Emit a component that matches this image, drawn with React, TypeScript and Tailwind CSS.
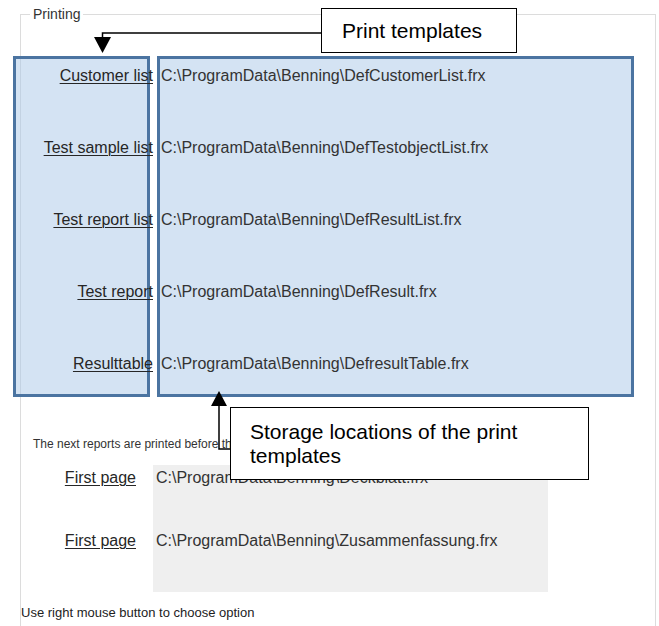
import React from 'react';

const templates = [
  { label: 'Customer list', path: 'C:\\ProgramData\\Benning\\DefCustomerList.frx' },
  { label: 'Test sample list', path: 'C:\\ProgramData\\Benning\\DefTestobjectList.frx' },
  { label: 'Test report list', path: 'C:\\ProgramData\\Benning\\DefResultList.frx' },
  { label: 'Test report', path: 'C:\\ProgramData\\Benning\\DefResult.frx' },
  { label: 'Resulttable', path: 'C:\\ProgramData\\Benning\\DefresultTable.frx' },
];

const preReports = [
  { label: 'First page', path: 'C:\\ProgramData\\Benning\\Deckblatt.frx' },
  { label: 'First page', path: 'C:\\ProgramData\\Benning\\Zusammenfassung.frx' },
];

function Arrows() {
  return (
    <svg className="pointer-events-none absolute inset-0" width={659} height={626} viewBox="0 0 659 626">
      {/* Print templates -> labels column */}
      <polyline points="321,33 102.5,33 102.5,40" fill="none" stroke="#000" strokeWidth={1.5} />
      <polygon points="94,37 111,37 102.5,53" fill="#000" />
      {/* Storage locations -> paths column */}
      <polyline points="230,449 219,449 219,404" fill="none" stroke="#000" strokeWidth={1.5} />
      <polygon points="211,406 227,406 219,391" fill="#000" />
    </svg>
  );
}

export default function App() {
  return (
    <div className="relative h-[626px] w-[659px] overflow-hidden bg-white pl-[20px] pt-[14px] font-['Liberation_Sans',Arial,sans-serif] text-[#262626]">
      <div className="relative h-[640px] w-[636px] border border-[#dcdcdc]">
        <span className="absolute -top-[9px] left-[9px] bg-white px-[3px] text-[14px] leading-[16px] text-[#333]">
          Printing
        </span>

        <div className="pt-[41px]">
          {/* highlighted template columns */}
          <div className="-ml-[8px] flex gap-[7px]">
            <div className="flex h-[341px] w-[137px] flex-col items-end gap-[52px] border-[3px] border-[#4b74a1] bg-[rgba(170,200,232,0.5)] pt-[7px]">
              {templates.map((t) => (
                <span
                  key={t.label}
                  className="-mr-[6px] whitespace-nowrap text-[16px] leading-[20px] underline decoration-1 underline-offset-[2px]"
                >
                  {t.label}
                </span>
              ))}
            </div>
            <div className="flex h-[341px] w-[477px] flex-col gap-[52px] border-[3px] border-[#4b74a1] bg-[rgba(170,200,232,0.5)] pl-[1px] pt-[7px]">
              {templates.map((t) => (
                <span key={t.path} className="whitespace-nowrap text-[16px] leading-[20px] text-[#333]">
                  {t.path}
                </span>
              ))}
            </div>
          </div>

          <p className="ml-[12px] mt-[40px] whitespace-nowrap text-[12px] leading-[14px] text-[#333]">
            The next reports are printed before the actual report:
          </p>

          <div className="mt-[14px] flex">
            <div className="flex w-[132px] flex-col items-end gap-[43px] pr-[17px] pt-[3px]">
              {preReports.map((r, i) => (
                <span key={i} className="whitespace-nowrap text-[16px] leading-[20px] underline decoration-1 underline-offset-[2px]">
                  {r.label}
                </span>
              ))}
            </div>
            <div className="flex h-[127px] w-[395px] flex-col gap-[43px] bg-[#efefef] pl-[3px] pt-[3px]">
              {preReports.map((r) => (
                <span key={r.path} className="whitespace-nowrap text-[16px] leading-[20px] text-[#333]">
                  {r.path}
                </span>
              ))}
            </div>
          </div>

          <p className="mt-[13px] whitespace-nowrap text-[13px] leading-[16px] text-[#222]">
            Use right mouse button to choose option
          </p>
        </div>
      </div>

      {/* callouts */}
      <div className="absolute left-[321px] top-[8px] flex h-[45px] w-[196px] items-center border border-black bg-white pl-[20px] text-[21px] leading-[24px] text-black">
        Print templates
      </div>
      <div className="absolute left-[230px] top-[407px] h-[73px] w-[359px] border border-black bg-white pl-[19px] pt-[12px] text-[21px] leading-[24px] text-black">
        Storage locations of the print
        <br />
        templates
      </div>

      <Arrows />
    </div>
  );
}
